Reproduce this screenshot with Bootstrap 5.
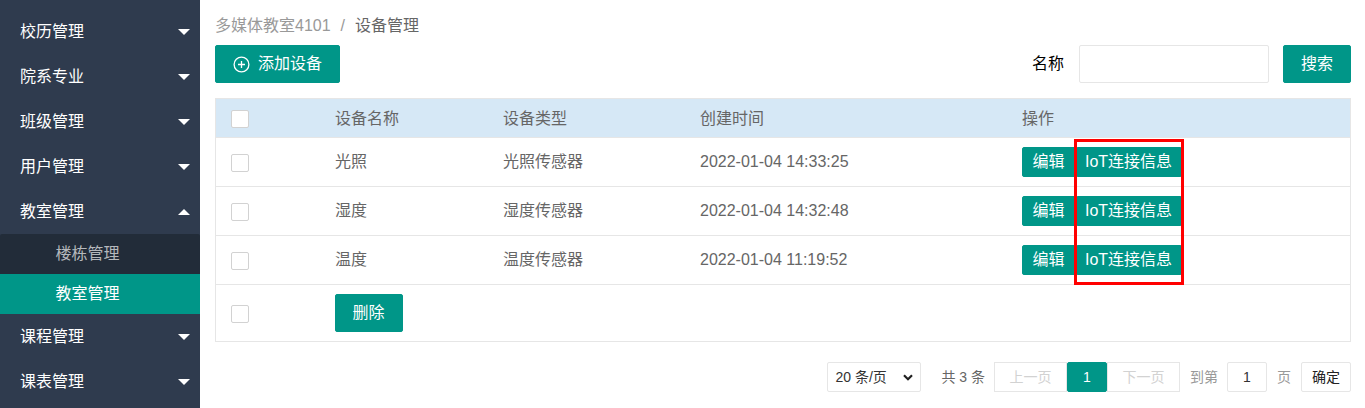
<!DOCTYPE html>
<html lang="zh-CN">
<head>
  <meta charset="UTF-8">
  <title>设备管理</title>
  <link href="https://cdn.jsdelivr.net/npm/bootstrap@5.3.0/dist/css/bootstrap.min.css" rel="stylesheet">
  <style>
    html, body { height: 408px; overflow: hidden; }
    body {
      font-family: "Liberation Sans", "Noto Sans CJK SC", sans-serif;
      font-size: 16px;
      color: #666;
    }
    .side-nav { width: 200px; height: 408px; background: #2f3b4e; padding-top: 9px; flex-shrink: 0; }
    .side-link {
      display: flex; align-items: center; justify-content: space-between;
      height: 45px; padding: 0 10px 0 20px; color: #fff; text-decoration: none;
    }
    .side-caret { border-left: 6px solid transparent; border-right: 6px solid transparent; border-top: 6px solid #fff; }
    .side-caret.open { border-top: 0; border-bottom: 6px solid #fff; }
    .side-sub { background: #222c39; border-radius: 2px 2px 0 0; }
    .side-sub a { display: block; height: 40px; line-height: 40px; padding-left: 55.5px; color: #b5b8bc; text-decoration: none; }
    .side-sub a.current { background: #009688; color: #fff; }
    .main-box { width: 1136px; margin-left: 15px; position: relative; }
    .crumbs { height: 45px; padding-top: 14px; margin: 0; --bs-breadcrumb-divider-color: #999; --bs-breadcrumb-item-padding-x: 10px; line-height: 24px; }
    .crumbs .breadcrumb-item { color: #666; }
    .crumbs .breadcrumb-item a { color: #999; text-decoration: none; }
    .crumbs .breadcrumb-item + .breadcrumb-item::before { color: #999; }
    .btn-teal { --bs-btn-bg: #009688; --bs-btn-border-color: #009688; --bs-btn-color: #fff; --bs-btn-hover-bg: #009688; --bs-btn-hover-color: #fff; --bs-btn-border-radius: 2px; --bs-btn-font-size: 16px; }
    .tool-row { height: 38px; margin-bottom: 15px; }
    .btn-add { width: 125px; height: 38px; padding: 0; }
    .btn-find { width: 68px; height: 38px; padding: 0; }
    .find-label { color: #000; width: 47px; }
    .find-input { width: 190px; height: 38px; border: 1px solid #e6e6e6; border-radius: 2px; margin-right: 14px; }
    .dev-table { table-layout: fixed; width: 1136px; margin: 0; color: #666; border: 1px solid #e6e6e6; }
    .dev-table > * > tr > * { padding: 0 0 0 15.5px; vertical-align: middle; border-bottom: 1px solid #e6e6e6; border-top: 0; font-weight: 400; color: #666; box-shadow: none; background: transparent; }
    .dev-table > * > tr > *:first-child { padding-left: 15px; }
    .dev-table thead tr { height: 39px; }
    .dev-table > thead > tr > th { background: #d6e8f6; padding-top: 2px; }
    .dev-table tbody tr { height: 49px; }
    .dev-table tbody tr.foot-row { height: 57px; }
    .tick { display: block; width: 18px; height: 18px; background: #fff; border: 1px solid #d2d2d2; border-radius: 2px; }
    td .tick { margin-top: 2px; }
    .btn-cell { height: 30px; padding: 0; line-height: 28px; }
    .btn-edit { width: 54px; margin-left: -0.5px; }
    .btn-iot { width: 106px; }
    .btn-del { width: 68px; height: 38px; padding: 0; margin-left: -0.5px; }
    .pager-row { height: 30px; margin-top: 20px; font-size: 14px; }
    .pager-select {
      width: 94px; height: 30px; padding: 0 0 0 7px; font-size: 14px; color: #333;
      border-color: #e6e6e6; border-radius: 2px;
      background-image: url("data:image/svg+xml,%3csvg xmlns='http://www.w3.org/2000/svg' viewBox='0 0 10 7'%3e%3cpath fill='none' stroke='%23222' stroke-width='2.2' d='M1 1.2l4 4 4-4'/%3e%3c/svg%3e");
      background-size: 10px 7px; background-position: right 7px center;
    }
    .pager-total { margin: 0 9px 0 20px; color: #666; }
    .pager-list { margin: 0; --bs-pagination-font-size: 14px; --bs-pagination-padding-x: 0; --bs-pagination-padding-y: 0; --bs-pagination-border-radius: 0; }
    .pager-list .page-item .page-link { height: 30px; line-height: 28px; text-align: center; border-color: #e6e6e6; color: #d2d2d2; background: #fff; margin-left: 0; }
    .pager-list .page-item .wide { width: 73px; }
    .pager-list .page-item.active .page-link { width: 40px; background: #009688; border-color: #009688; color: #fff; border-radius: 2px; }
    .pager-hint { color: #999; }
    .pager-gap { margin-left: 10px; }
    .pager-input { width: 40px; height: 30px; border: 1px solid #e6e6e6; border-radius: 2px; text-align: center; margin: 0 10px 0 9px; line-height: 28px; color: #333; }
    .pager-ok { width: 50px; height: 30px; border: 1px solid #e6e6e6; border-radius: 2px; margin-left: 10px; background: #fff; color: #222; font-size: 14px; padding: 0; }
    .red-frame { position: absolute; left: 859px; top: 139px; width: 110px; height: 146px; border: 3px solid #f00; pointer-events: none; }
  </style>
</head>
<body>
  <div class="d-flex">
    <nav class="side-nav">
      <a class="side-link" href="#">校历管理<span class="side-caret"></span></a>
      <a class="side-link" href="#">院系专业<span class="side-caret"></span></a>
      <a class="side-link" href="#">班级管理<span class="side-caret"></span></a>
      <a class="side-link" href="#">用户管理<span class="side-caret"></span></a>
      <a class="side-link" href="#">教室管理<span class="side-caret open"></span></a>
      <div class="side-sub">
        <a href="#">楼栋管理</a>
        <a class="current" href="#">教室管理</a>
      </div>
      <a class="side-link" href="#">课程管理<span class="side-caret"></span></a>
      <a class="side-link" href="#">课表管理<span class="side-caret"></span></a>
    </nav>

    <div class="main-box">
      <ol class="breadcrumb crumbs">
        <li class="breadcrumb-item"><a href="#">多媒体教室4101</a></li>
        <li class="breadcrumb-item active">设备管理</li>
      </ol>

      <div class="d-flex align-items-center tool-row">
        <button class="btn btn-teal btn-add d-flex align-items-center justify-content-center gap-2">
          <svg width="17" height="17" viewBox="0 0 17 17" fill="none" stroke="#fff" stroke-width="1.3"><circle cx="8.5" cy="8.5" r="7.4"/><path d="M8.5 5v7M5 8.5h7"/></svg>
          添加设备
        </button>
        <div class="ms-auto d-flex align-items-center">
          <span class="find-label">名称</span>
          <input class="find-input" type="text">
          <button class="btn btn-teal btn-find">搜索</button>
        </div>
      </div>

      <table class="table dev-table">
        <colgroup><col style="width:104px"><col style="width:168px"><col style="width:197px"><col style="width:322px"><col></colgroup>
        <thead>
          <tr><th><span class="tick"></span></th><th>设备名称</th><th>设备类型</th><th>创建时间</th><th>操作</th></tr>
        </thead>
        <tbody>
          <tr>
            <td><span class="tick"></span></td><td>光照</td><td>光照传感器</td><td>2022-01-04 14:33:25</td>
            <td><button class="btn btn-teal btn-cell btn-edit">编辑</button><button class="btn btn-teal btn-cell btn-iot">IoT连接信息</button></td>
          </tr>
          <tr>
            <td><span class="tick"></span></td><td>湿度</td><td>湿度传感器</td><td>2022-01-04 14:32:48</td>
            <td><button class="btn btn-teal btn-cell btn-edit">编辑</button><button class="btn btn-teal btn-cell btn-iot">IoT连接信息</button></td>
          </tr>
          <tr>
            <td><span class="tick"></span></td><td>温度</td><td>温度传感器</td><td>2022-01-04 11:19:52</td>
            <td><button class="btn btn-teal btn-cell btn-edit">编辑</button><button class="btn btn-teal btn-cell btn-iot">IoT连接信息</button></td>
          </tr>
          <tr class="foot-row">
            <td><span class="tick"></span></td>
            <td colspan="4"><button class="btn btn-teal btn-del">删除</button></td>
          </tr>
        </tbody>
      </table>

      <div class="d-flex align-items-center justify-content-end pager-row">
        <select class="form-select pager-select"><option>20 条/页</option></select>
        <span class="pager-total">共 3 条</span>
        <ul class="pagination pager-list">
          <li class="page-item disabled"><a class="page-link wide" href="#">上一页</a></li>
          <li class="page-item active"><a class="page-link" href="#">1</a></li>
          <li class="page-item disabled"><a class="page-link wide" href="#">下一页</a></li>
        </ul>
        <span class="pager-hint pager-gap">到第</span>
        <span class="pager-input">1</span>
        <span class="pager-hint">页</span>
        <button class="pager-ok">确定</button>
      </div>

      <div class="red-frame"></div>
    </div>
  </div>
  <script src="https://cdn.jsdelivr.net/npm/bootstrap@5.3.0/dist/js/bootstrap.bundle.min.js"></script>
</body>
</html>
